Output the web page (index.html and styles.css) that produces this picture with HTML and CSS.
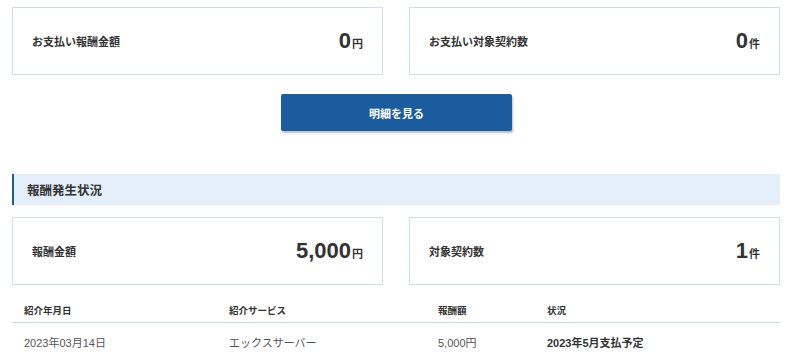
FILE: index.html
```html
<!DOCTYPE html>
<html lang="ja">

<head>
    <meta charset="UTF-8">
    <meta name="viewport" content="width=device-width, initial-scale=1.0">
    <title>報酬状況</title>
    <link rel="stylesheet" href="styles.css">
</head>

<body>
    <div class="page">
        <div class="summary">
            <div class="card">
                <div class="card-label">お支払い報酬金額</div>
                <div class="card-value">0<span class="unit">円</span></div>
            </div>
            <div class="card">
                <div class="card-label">お支払い対象契約数</div>
                <div class="card-value">0<span class="unit">件</span></div>
            </div>
        </div>

        <div class="actions">
            <button class="detail-btn">明細を見る</button>
        </div>

        <h2 class="section-title">報酬発生状況</h2>

        <div class="summary">
            <div class="card">
                <div class="card-label">報酬金額</div>
                <div class="card-value">5,000<span class="unit">円</span></div>
            </div>
            <div class="card">
                <div class="card-label">対象契約数</div>
                <div class="card-value">1<span class="unit">件</span></div>
            </div>
        </div>

        <table class="history">
            <thead>
                <tr>
                    <th class="col-date">紹介年月日</th>
                    <th class="col-service">紹介サービス</th>
                    <th class="col-amount">報酬額</th>
                    <th>状況</th>
                </tr>
            </thead>
            <tbody>
                <tr>
                    <td>2023年03月14日</td>
                    <td>エックスサーバー</td>
                    <td>5,000円</td>
                    <td class="status">2023年5月支払予定</td>
                </tr>
            </tbody>
        </table>
    </div>
</body>

</html>
```

FILE: styles.css
```css
:root {
    --primary-color: #1b5c9f;
    --text-color: #333333;
    --sub-text: #555555;
    --border-color: #d3dde9;
    --title-bg: #e5eff9;
}

* {
    margin: 0;
    padding: 0;
    box-sizing: border-box;
}

body {
    font-family: 'Liberation Sans', 'Noto Sans CJK JP', sans-serif;
    font-size: 11px;
    color: var(--text-color);
    background: #ffffff;
}

.page {
    padding: 7px 20px 0 12px;
}

.summary {
    display: grid;
    grid-template-columns: 1fr 1fr;
    gap: 26px;
}

.card {
    height: 68px;
    border: 1px solid var(--border-color);
    display: flex;
    justify-content: space-between;
    align-items: center;
    padding: 0 19px;
}

.card-label {
    font-size: 11px;
    font-weight: bold;
}

.card-value {
    font-size: 22px;
    font-weight: bold;
    line-height: 1;
}

.card-value .unit {
    font-size: 11px;
    margin-left: 1px;
}

.actions {
    display: flex;
    justify-content: center;
    margin-top: 19px;
}

.detail-btn {
    width: 231px;
    height: 37px;
    margin-left: 1px;
    background: var(--primary-color);
    color: #ffffff;
    border: none;
    border-radius: 2px;
    font-family: inherit;
    font-size: 11px;
    font-weight: bold;
    box-shadow: 1px 2px 2px rgba(0, 0, 0, 0.25);
    cursor: pointer;
}

.section-title {
    margin-top: 43px;
    height: 31px;
    display: flex;
    align-items: center;
    padding-left: 13px;
    font-size: 12.5px;
    font-weight: bold;
    background: var(--title-bg);
    border-left: 2px solid var(--primary-color);
    margin-bottom: 12px;
}

.history {
    width: 100%;
    border-collapse: collapse;
    margin-top: 0;
}

.history th {
    text-align: left;
    vertical-align: bottom;
    font-size: 9.5px;
    font-weight: bold;
    height: 37px;
    padding: 0 0 5px 12px;
    border-bottom: 1px solid #c9d7e8;
}

.history td {
    height: 40px;
    padding: 0 0 0 12px;
    color: var(--sub-text);
}

.history .col-date {
    width: 205px;
}

.history .col-service {
    width: 209px;
}

.history .col-amount {
    width: 109px;
}

.history td.status {
    color: var(--text-color);
    font-weight: bold;
}
```
